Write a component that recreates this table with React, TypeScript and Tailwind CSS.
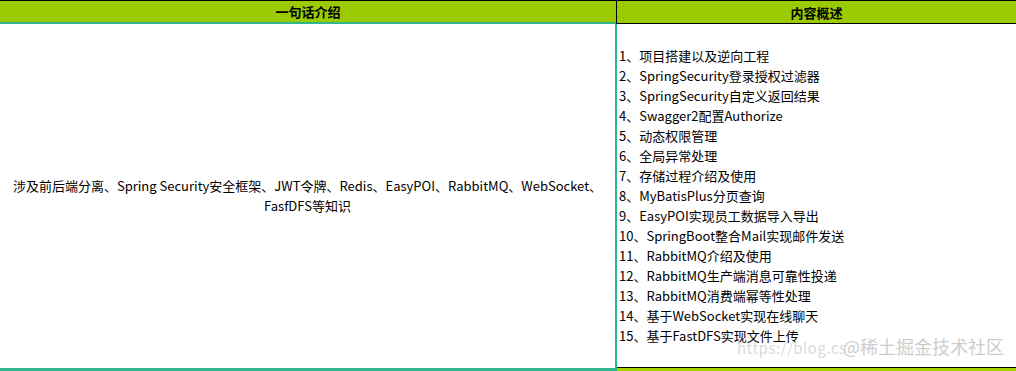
import React from "react";

const items = [
  "1、项目搭建以及逆向工程",
  "2、SpringSecurity登录授权过滤器",
  "3、SpringSecurity自定义返回结果",
  "4、Swagger2配置Authorize",
  "5、动态权限管理",
  "6、全局异常处理",
  "7、存储过程介绍及使用",
  "8、MyBatisPlus分页查询",
  "9、EasyPOI实现员工数据导入导出",
  "10、SpringBoot整合Mail实现邮件发送",
  "11、RabbitMQ介绍及使用",
  "12、RabbitMQ生产端消息可靠性投递",
  "13、RabbitMQ消费端幂等性处理",
  "14、基于WebSocket实现在线聊天",
  "15、基于FastDFS实现文件上传",
];

export default function App() {
  return (
    <div
      className="w-[1016px] h-[371px] bg-white flex flex-col text-[13px] text-black relative overflow-hidden"
      style={{ fontFamily: '"Microsoft YaHei", "Noto Sans CJK SC", "Noto Sans", sans-serif' }}
    >
      <div className="flex h-[24px] bg-[#9acb00] border-t border-black shrink-0">
        <div className="w-[616px] border-b-2 border-[#2fb68c] flex items-center justify-center font-bold leading-none">
          一句话介绍
        </div>
        <div className="flex-1 border-l border-black border-b border-b-black flex items-center justify-center font-bold leading-none">
          内容概述
        </div>
      </div>
      <div className="flex flex-1">
        <div className="w-[617px] border-r-2 border-[#2fb68c] border-b-[3px] border-b-[#2fb68c] flex items-center justify-center text-center leading-[20px]">
          <div>
            涉及前后端分离、Spring Security安全框架、JWT令牌、Redis、EasyPOI、RabbitMQ、WebSocket、
            <br />
            FasfDFS等知识
          </div>
        </div>
        <div className="flex-1 flex flex-col border-b-[3px] border-b-[#a6d200]">
          <div className="flex-1 border-b border-black flex flex-col justify-center pl-[2px] leading-[20px]">
            {items.map((t) => (
              <div key={t}>{t}</div>
            ))}
          </div>
        </div>
      </div>
      <div className="absolute left-[737px] top-[342px] leading-[12px] whitespace-nowrap text-[15px] text-[#dadada] tracking-[0.5px]">
        https://blog.cs
      </div>
      <div className="absolute left-[843px] top-[335px] leading-[22px] text-[18px] text-[#cdcdcd] [text-shadow:0_0_2px_#ffffff]">
        @稀土掘金技术社区
      </div>
    </div>
  );
}
